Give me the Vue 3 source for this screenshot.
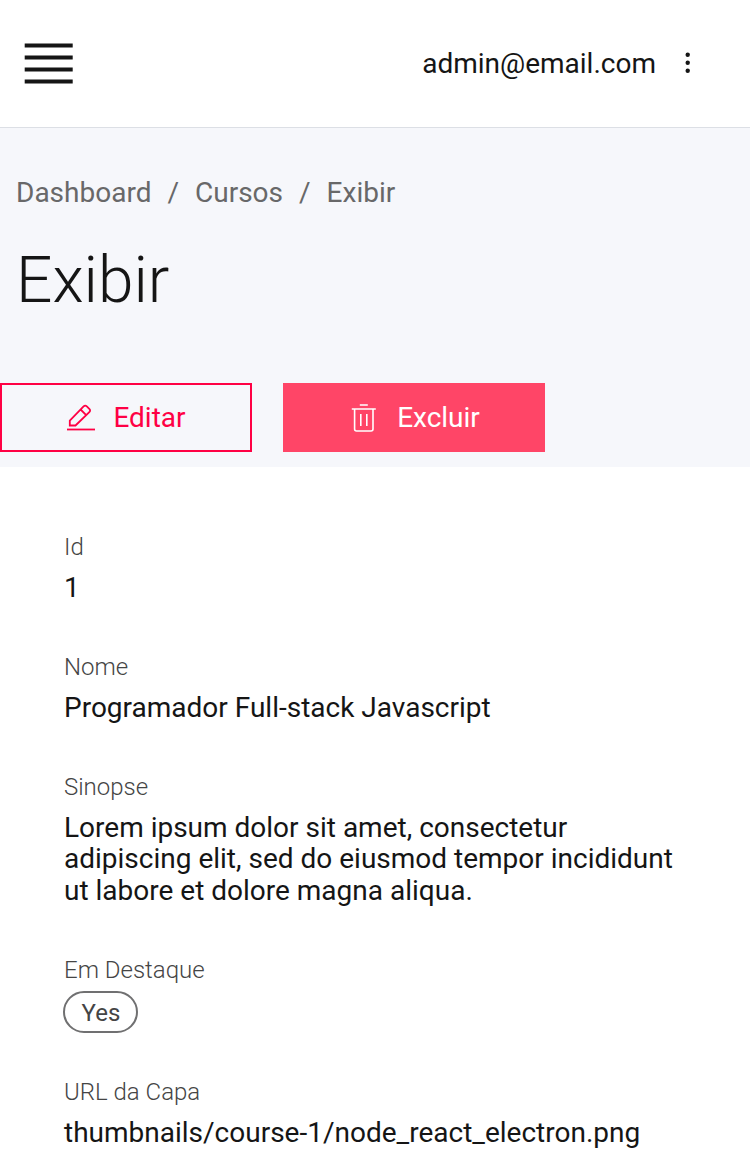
<script setup>
const crumbs = ['Dashboard', 'Cursos', 'Exibir']
</script>

<template>
  <div class="page">
    <header class="topbar">
      <svg class="menu" width="50" height="42" viewBox="0 0 50 42" fill="#151515">
        <path d="M.7 .6h48v3.900H.7zM.7 12.600h48v3.900H.7zM.7 24.600h48v3.900H.7zM.7 36.600h48v3.900H.7z" />
      </svg>
      <span class="email">admin@email.com</span>
      <svg class="dots" width="6" height="22" viewBox="0 0 6 22" fill="#151515">
        <circle cx="2.700" cy="2.700" r="2.200" /><circle cx="2.700" cy="10.700" r="2.200" /><circle cx="2.700" cy="18.700" r="2.200" />
      </svg>
    </header>
    <section class="hero">
      <nav class="crumbs">
        <template v-for="(c, i) in crumbs" :key="c">
          <span v-if="i" class="slash">/</span><span>{{ c }}</span>
        </template>
      </nav>
      <h1>Exibir</h1>
      <div class="actions">
        <button class="edit">
          <svg class="pen" width="28" height="28" viewBox="0 0 28 28" fill="none" stroke="currentColor" stroke-width="1.8">
            <path d="M0 25.500h28" />
            <path d="M2.800 21.500v-5L16.600 2.400q1.600-1.600 3.200 0l2.500 2.500q1.600 1.600 0 3.200L8.500 21.500zM13.600 5.500l5.600 5.600" />
          </svg>
          <span>Editar</span>
        </button>
        <button class="delete">
          <svg class="trash" width="26" height="30" viewBox="0 0 26 30" fill="none" stroke="currentColor" stroke-width="1.6">
            <path d="M.8 6h24M8.800 2h8M3.600 6v20q0 2 2 2h14.400q2 0 2-2v-20M9.800 11v12M15.800 11v12" />
          </svg>
          <span>Excluir</span>
        </button>
      </div>
    </section>
    <dl class="fields">
      <div class="field"><dt>Id</dt><dd>1</dd></div>
      <div class="field"><dt>Nome</dt><dd>Programador Full-stack Javascript</dd></div>
      <div class="field"><dt>Sinopse</dt><dd class="long">Lorem ipsum dolor sit amet, consectetur adipiscing elit, sed do eiusmod tempor incididunt ut labore et dolore magna aliqua.</dd></div>
      <div class="field featured"><dt>Em Destaque</dt><dd><span class="tag">Yes</span></dd></div>
      <div class="field"><dt>URL da Capa</dt><dd>thumbnails/course-1/node_react_electron.png</dd></div>
    </dl>
  </div>
</template>

<style>
body { background: #fff; overflow: hidden; }
</style>
<style scoped>
* { box-sizing: border-box; }
.page { width: 750px; height: 1168px; overflow: hidden; font-family: Roboto, "Liberation Sans", sans-serif; font-size: 28px; color: #151515; background: #fff; }
.topbar { height: 128px; border-bottom: 1px solid #dcdfe5; display: flex; align-items: center; padding: 0 59px 0 24px; }
.email { margin-left: auto; line-height: 32px; }
.dots { margin: 0 0 2px 29px; }
.hero { height: 339px; background: #f6f7fb; padding-top: 48px; }
.crumbs { display: flex; padding-left: 16px; height: 34px; line-height: 34px; color: #686869; }
.slash { margin: 0 16px; }
h1 { margin: 31px 0 0 16px; font-size: 64px; line-height: 80px; font-weight: 300; height: 80px; }
.actions { display: flex; gap: 31px; margin-top: 62px; }
button { height: 69px; padding: 0; border: 0; border-radius: 0; display: flex; align-items: center; justify-content: center; font: 400 28px/32px Roboto, sans-serif; }
.edit { width: 252px; color: #ff0044; border: 2px solid #ff0044; background: transparent; gap: 18px; padding-left: 1px; }
.delete { width: 262px; color: #fff; background: #ff4567; gap: 20px; padding-left: 3px; }
.fields { margin: 0; padding: 64px 64px 0; }
.field { margin-bottom: 47.5px; }
dt { font-size: 24px; line-height: 32px; font-weight: 300; color: #454545; }
dd { margin: 9px 0 0; line-height: 31.5px; }
.long { margin: 8.8px 0 47.7px; line-height: 31.5px; }
.featured { margin-bottom: 43px; }
.featured dd { margin: 5px 0 0 -1px; }
.tag { display: block; width: 75px; height: 42px; border: 2px solid #707071; border-radius: 21px; font-size: 24px; line-height: 40px; padding-left: 1px; text-align: center; color: #454545; }
</style>
